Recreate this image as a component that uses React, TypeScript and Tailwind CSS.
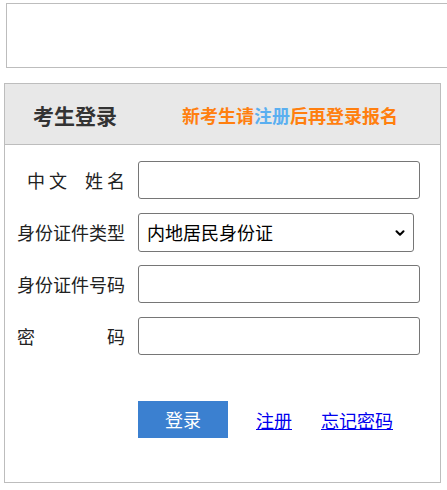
import { ChevronDown } from 'lucide-react'

// Exam candidate login panel — blank banner box on top, login form below

const font = { fontFamily: '"Microsoft YaHei", "Noto Sans CJK SC", "Noto Sans", sans-serif' }

function Field({ label, children }: { label: React.ReactNode; children: React.ReactNode }) {
  return (
    <div className="flex items-center h-[38px]">
      <div className="w-[108px] ml-[12px] mr-[13px] text-[18px] leading-[24px] text-[#222]">{label}</div>
      {children}
    </div>
  )
}

const inputCls =
  'h-[38px] w-[282px] rounded-[3px] border border-[#767676] bg-white px-2 text-[18px] text-black outline-none'

export default function App() {
  return (
    <div className="w-[447px] h-[490px] overflow-hidden bg-white" style={font}>
      <div className="mt-[3px] ml-[6px] h-[65px] w-[460px] border border-[#bdbdbd]" />

      <div className="mt-[15px] ml-[4px] w-[437px] h-[400px] border border-[#bdbdbd]">
        <div className="flex items-center h-[61px] pt-[2px] bg-[#e8e8e8] border-b border-[#bdbdbd]">
          <h2 className="ml-[28px] text-[21px] font-bold leading-[28px] text-[#333]">考生登录</h2>
          <p className="ml-[65px] text-[18px] font-bold leading-[24px] text-[#ff7f0f]">
            新考生请<span className="text-[#5aaff0]">注册</span>后再登录报名
          </p>
        </div>

        <div className="flex flex-col gap-[14px] pt-[16px]">
          <Field
            label={
              <div className="flex justify-end">
                <span>中</span>
                <span className="ml-[4px]">文</span>
                <span className="ml-[18px]">姓</span>
                <span className="ml-[4px]">名</span>
              </div>
            }
          >
            <input className={inputCls} />
          </Field>

          <Field label={<div className="text-right">身份证件类型</div>}>
            <div className="relative">
              <select className="h-[39px] w-[276px] appearance-none rounded-[3px] border border-[#767676] bg-white pl-[8px] text-[18px] leading-[24px] text-black outline-none">
                <option>内地居民身份证</option>
                <option>港澳居民来往内地通行证</option>
                <option>台湾居民来往大陆通行证</option>
                <option>护照</option>
              </select>
              <ChevronDown className="absolute right-[7px] top-[13px] w-[14px] h-[14px] text-black pointer-events-none" strokeWidth={3.5} />
            </div>
          </Field>

          <Field label={<div className="text-right">身份证件号码</div>}>
            <input className={inputCls} />
          </Field>

          <Field
            label={
              <div className="flex justify-between">
                <span>密</span>
                <span>码</span>
              </div>
            }
          >
            <input type="password" className={inputCls} />
          </Field>
        </div>

        <div className="flex items-center mt-[46px] ml-[133px]">
          <button className="h-[37px] w-[90px] bg-[#3b80d0] text-[18px] text-white">登录</button>
          <a href="#" className="ml-[28px] text-[18px] leading-[24px] text-[#0000ee] underline">注册</a>
          <a href="#" className="ml-[29px] text-[18px] leading-[24px] text-[#0000ee] underline">忘记密码</a>
        </div>
      </div>
    </div>
  )
}
